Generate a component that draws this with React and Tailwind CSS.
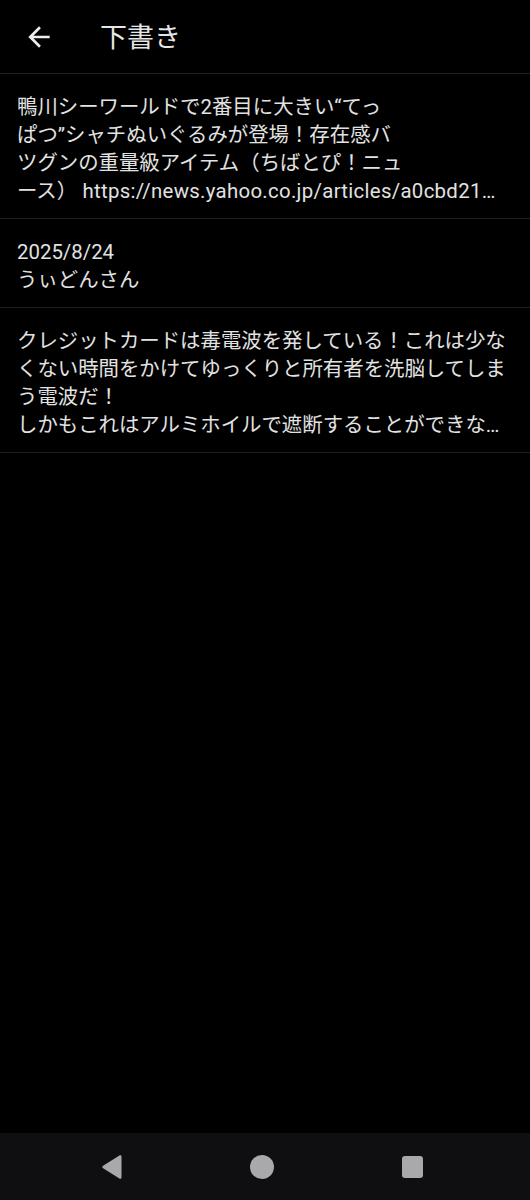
import React from 'react';

const drafts = [
    [
        '鴨川シーワールドで2番目に大きい“てっ',
        'ぱつ”シャチぬいぐるみが登場！存在感バ',
        'ツグンの重量級アイテム（ちばとぴ！ニュ',
        <>
            ース）<span className="tracking-[0.3px]"> https://news.yahoo.co.jp/articles/a0cbd21…</span>
        </>,
    ],
    ['2025/8/24', 'うぃどんさん'],
    [
        'クレジットカードは毒電波を発している！これは少な',
        'くない時間をかけてゆっくりと所有者を洗脳してしま',
        'う電波だ！',
        'しかもこれはアルミホイルで遮断することができな…',
    ],
];

const DraftRow = ({ lines }) => (
    <div className="border-b border-[#1f1f1f] pb-[13px] pl-[17px] pr-3 pt-[19px]">
        {lines.map((line, i) => (
            <div key={i} className="overflow-hidden whitespace-nowrap text-[20.4px] leading-[28px] text-[#e2e2e2]">
                {line}
            </div>
        ))}
    </div>
);

export default function App() {
    return (
        <div
            className="flex h-[1200px] w-[530px] flex-col bg-black"
            style={{ fontFamily: 'Roboto, "Noto Sans CJK JP", sans-serif' }}
        >
            <header className="flex h-[74px] shrink-0 items-center border-b border-[#1f1f1f]">
                <button type="button" className="ml-[23px] flex h-8 w-8 items-center justify-center text-[#ececec]">
                    <svg viewBox="0 0 24 24" fill="currentColor" className="h-8 w-8" aria-hidden="true">
                        <path d="M20 11H7.83l5.59-5.59L12 4l-8 8 8 8 1.41-1.41L7.83 13H20v-2z" />
                    </svg>
                </button>
                <h1 className="ml-[45px] pt-[3px] text-[27px] font-normal leading-none text-[#e6e6e6]">下書き</h1>
            </header>

            <main className="flex-1">
                {drafts.map((lines, i) => (
                    <DraftRow key={i} lines={lines} />
                ))}
            </main>

            <nav className="flex h-[67px] shrink-0 items-center bg-[#0f0e11] pl-[37px]">
                <div className="flex w-[150px] justify-center">
                    <svg viewBox="0 0 20 24" className="h-[24px] w-[20px] text-[#a9a9ac]" aria-hidden="true">
                        <path
                            d="M19.5 1.6v20.8c0 1.1-1.2 1.7-2.1 1.1L1.1 13.2a1.5 1.5 0 0 1 0-2.4L17.4.5c.9-.6 2.1 0 2.1 1.1z"
                            fill="currentColor"
                        />
                    </svg>
                </div>
                <div className="flex w-[150px] justify-center">
                    <span className="h-[24px] w-[24px] rounded-full bg-[#a9a9ac]" />
                </div>
                <div className="flex w-[150px] justify-center">
                    <span className="h-[22px] w-[21px] rounded-[3px] bg-[#a9a9ac]" />
                </div>
            </nav>
        </div>
    );
}
